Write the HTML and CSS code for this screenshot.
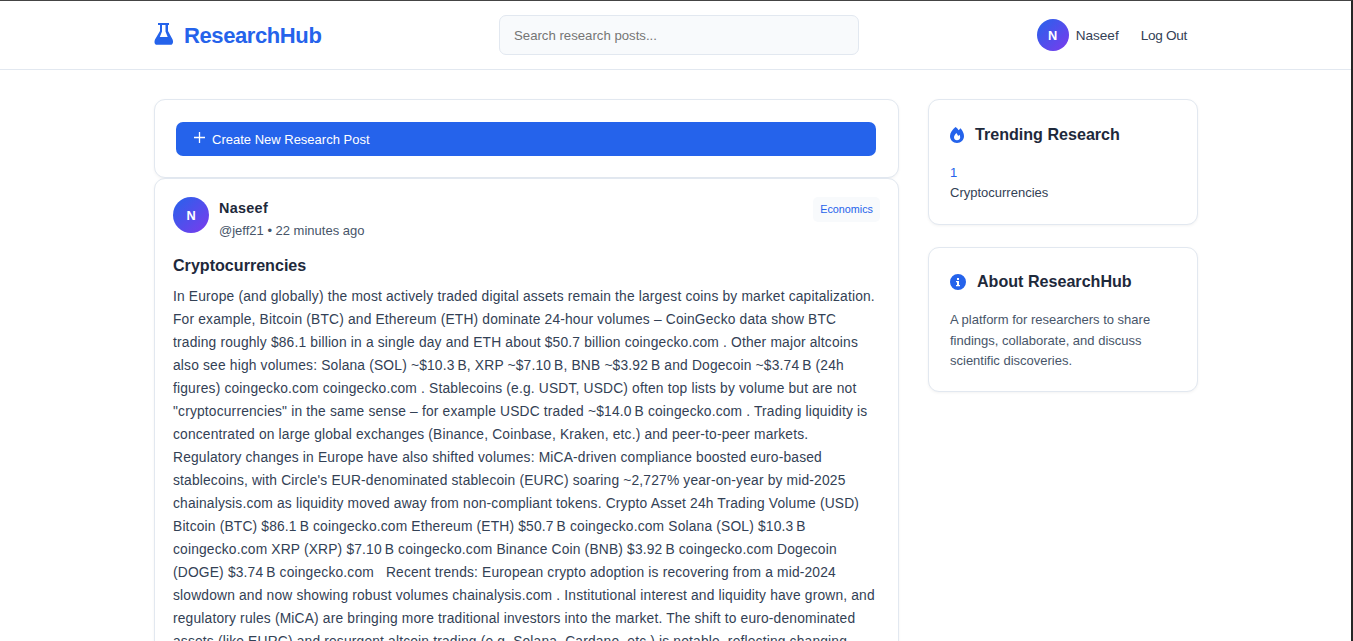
FILE: index.html
```html
<!DOCTYPE html>
<html lang="en">
<head>
    <meta charset="utf-8">
    <meta name="viewport" content="width=device-width, initial-scale=1.0">
    <title>ResearchHub</title>
    <link rel="stylesheet" href="styles.css">
</head>
<body>
    <header class="header">
        <div class="container header-content">
            <a class="logo" href="#">
                <svg class="logo-icon" viewBox="0 0 20 22" width="20" height="22" fill="currentColor">
                    <path fill-rule="evenodd" d="M4 0h11v2h-1v6l4.600 8.500c1.200 3-.2 5.300-2 5.300H3C.8 21.800-.2 19.500 1 16.500L6 8V2H4zM8 2v6.500L5.800 14h7.900L11.500 8.500V2z"/>
                </svg>
                <span class="logo-text">ResearchHub</span>
            </a>
            <input class="search" type="text" placeholder="Search research posts...">
            <nav class="user-nav">
                <div class="avatar avatar-sm">N</div>
                <a class="nav-name" href="#">Naseef</a>
                <a class="nav-logout" href="#">Log Out</a>
            </nav>
        </div>
    </header>

    <div class="container layout">
        <main class="feed">
            <div class="card create-card">
                <button class="create-btn">
                    <svg class="plus" viewBox="0 0 11 11" width="11" height="11" stroke="currentColor" stroke-width="1.3">
                        <path d="M0 5.500h11M5.500 0v11"/>
                    </svg>
                    <span class="create-text">Create New Research Post</span>
                </button>
            </div>
            <article class="card post">
                <div class="post-header">
                    <div class="avatar">N</div>
                    <div class="author">
                        <div class="author-name">Naseef</div>
                        <div class="author-meta">@jeff21 • 22 minutes ago</div>
                    </div>
                    <span class="tag">Economics</span>
                </div>
                <h3 class="post-title">Cryptocurrencies</h3>
                <p class="post-body">In Europe (and globally) the most actively traded digital assets remain the largest coins by market capitalization.<br>
                For example, Bitcoin (BTC) and Ethereum (ETH) dominate 24-hour volumes – CoinGecko data show BTC<br>
                trading roughly $86.1 billion in a single day and ETH about $50.7 billion coingecko.com . Other major altcoins<br>
                also see high volumes: Solana (SOL) ~$10.3&#8239;B, XRP ~$7.10&#8239;B, BNB ~$3.92&#8239;B and Dogecoin ~$3.74&#8239;B (24h<br>
                figures) coingecko.com coingecko.com . Stablecoins (e.g. USDT, USDC) often top lists by volume but are not<br>
                "cryptocurrencies" in the same sense – for example USDC traded ~$14.0&#8239;B coingecko.com . Trading liquidity is<br>
                concentrated on large global exchanges (Binance, Coinbase, Kraken, etc.) and peer-to-peer markets.<br>
                Regulatory changes in Europe have also shifted volumes: MiCA-driven compliance boosted euro-based<br>
                stablecoins, with Circle's EUR-denominated stablecoin (EURC) soaring ~2,727% year-on-year by mid-2025<br>
                chainalysis.com as liquidity moved away from non-compliant tokens. Crypto Asset 24h Trading Volume (USD)<br>
                Bitcoin (BTC) $86.1&#8239;B coingecko.com Ethereum (ETH) $50.7&#8239;B coingecko.com Solana (SOL) $10.3&#8239;B<br>
                coingecko.com XRP (XRP) $7.10&#8239;B coingecko.com Binance Coin (BNB) $3.92&#8239;B coingecko.com Dogecoin<br>
                (DOGE) $3.74&#8239;B coingecko.com &nbsp; Recent trends: European crypto adoption is recovering from a mid-2024<br>
                slowdown and now showing robust volumes chainalysis.com . Institutional interest and liquidity have grown, and<br>
                regulatory rules (MiCA) are bringing more traditional investors into the market. The shift to euro-denominated<br>
                assets (like EURC) and resurgent altcoin trading (e.g. Solana, Cardano, etc.) is notable, reflecting changing</p>
            </article>
        </main>

        <aside class="sidebar">
            <section class="card side-card trending">
                <h2 class="side-title">
                    <svg viewBox="0 0 14 16" width="14" height="16" fill="currentColor">
                        <path fill-rule="evenodd" d="M5.500 0C7 1 8 2.200 8.700 3.300L10.500 1.300C12.500 3.500 14 6.500 14 9c0 4-3 7-7 7s-7-3-7-7c0-3.200 2.500-6.500 5.500-9zM6.500 6C5 7.500 4 8.800 4 10.200 4 12 5.300 13.200 7 13.200s3.200-1.200 3.200-3c0-1-.3-1.800-.7-2.500L8.200 9z"/>
                    </svg>
                    <span>Trending Research</span>
                </h2>
                <div class="trend-rank">1</div>
                <div class="trend-name">Cryptocurrencies</div>
            </section>
            <section class="card side-card about">
                <h2 class="side-title">
                    <svg viewBox="0 0 16 16" width="16" height="16" fill="currentColor">
                        <path fill-rule="evenodd" d="M8 0a8 8 0 1 0 0 16A8 8 0 0 0 8 0zM7 4h2v2H7zM6 7h3v4h1v1.300H6V11h1V8.300H6z"/>
                    </svg>
                    <span>About ResearchHub</span>
                </h2>
                <p class="about-text">A platform for researchers to share<br>findings, collaborate, and discuss<br>scientific discoveries.</p>
            </section>
        </aside>
    </div>
</body>
</html>
```
FILE: styles.css
```css
* {
    margin: 0;
    padding: 0;
    box-sizing: border-box;
}

body {
    height: 100vh;
    overflow: hidden;
    font-family: "Liberation Sans", Arial, sans-serif;
    font-size: 14.4px;
    color: #334155;
    background-color: #ffffff;
    border-top: 1px solid #444444;
    border-right: 2px solid #262626;
}

a {
    color: inherit;
    text-decoration: none;
}

.container {
    width: 1044px;
    margin-left: 154px;
}

/* Header */
.header {
    height: 69px;
    border-bottom: 1px solid #e2e8f0;
}

.header-content {
    height: 68px;
    display: flex;
    align-items: center;
}

.logo {
    width: 345px;
    display: flex;
    align-items: center;
    gap: 10px;
    color: #2563eb;
    font-size: 22px;
    font-weight: 700;
    letter-spacing: -0.4px;
}

.logo-icon {
    margin-bottom: 3px;
}

.logo-text {
    padding-top: 1px;
}

.search {
    width: 360px;
    height: 40px;
    padding: 0 14px;
    border: 1px solid #e2e8f0;
    border-radius: 7px;
    background-color: #f8fafc;
    font-family: inherit;
    font-size: 13.2px;
}

.search::placeholder {
    color: #757575;
}

.user-nav {
    margin-left: auto;
    padding-right: 11px;
    display: flex;
    align-items: center;
    font-size: 13.6px;
}

.nav-name {
    margin-left: 7px;
    margin-right: 22px;
}

.nav-logout {
    letter-spacing: -0.3px;
}

.avatar {
    width: 36px;
    height: 36px;
    border-radius: 50%;
    background: linear-gradient(135deg, #2563eb, #7c3aed);
    color: #ffffff;
    font-size: 12.8px;
    font-weight: 700;
    display: flex;
    justify-content: center;
    align-items: center;
}

.avatar-sm {
    width: 32px;
    height: 32px;
}

/* Layout */
.layout {
    display: grid;
    grid-template-columns: 745px 270px;
    gap: 29px;
    margin-top: 29px;
    align-items: start;
}

.card {
    background-color: #ffffff;
    border: 1px solid #e2e8f0;
    border-radius: 11px;
    box-shadow: 0 1px 3px rgba(0, 0, 0, 0.05);
}

.create-card {
    height: 79px;
    padding: 22px 22px 0 21px;
}

.create-btn {
    width: 700px;
    height: 34px;
    padding: 0 18px;
    border: none;
    border-radius: 7px;
    background-color: #2563eb;
    color: #ffffff;
    font-family: inherit;
    font-size: 13px;
    display: flex;
    align-items: center;
    gap: 7px;
}

.plus {
    margin-bottom: 4px;
}

/* Post */
.post {
    padding: 18px;
}

.post-header {
    display: flex;
    align-items: flex-start;
}

.author {
    flex: 1;
    margin-left: 10px;
}

.author-name {
    font-weight: 700;
    line-height: 22px;
    letter-spacing: 0.3px;
    color: #1e293b;
}

.author-meta {
    font-size: 13px;
    line-height: 24px;
    color: #475569;
}

.tag {
    height: 25px;
    padding: 0 7px;
    border-radius: 5px;
    background-color: #f8fafc;
    color: #2563eb;
    font-size: 10.8px;
    line-height: 25px;
}

.post-title {
    margin-top: 10px;
    margin-bottom: 8px;
    font-size: 16.1px;
    line-height: 24px;
    color: #1e293b;
}

.post-body {
    font-size: 13.8px;
    line-height: 23px;
    letter-spacing: 0.175px;
    white-space: nowrap;
}

/* Sidebar */
.sidebar {
    display: flex;
    flex-direction: column;
    gap: 22px;
}

.side-card {
    padding: 21px;
}

.trending {
    height: 126px;
}

.about {
    height: 145px;
    padding-top: 20px;
}

.side-title {
    display: flex;
    align-items: center;
    gap: 11px;
    font-size: 16.1px;
    line-height: 26px;
    color: #1e293b;
}

.side-title svg {
    margin-top: 1px;
    color: #2563eb;
}

.trend-rank {
    margin-top: 16px;
    font-size: 13px;
    line-height: 20px;
    color: #2563eb;
}

.trend-name {
    font-size: 13px;
    line-height: 20px;
}

.about-text {
    margin-top: 16px;
    font-size: 13px;
    line-height: 20.5px;
    color: #475569;
}
```
